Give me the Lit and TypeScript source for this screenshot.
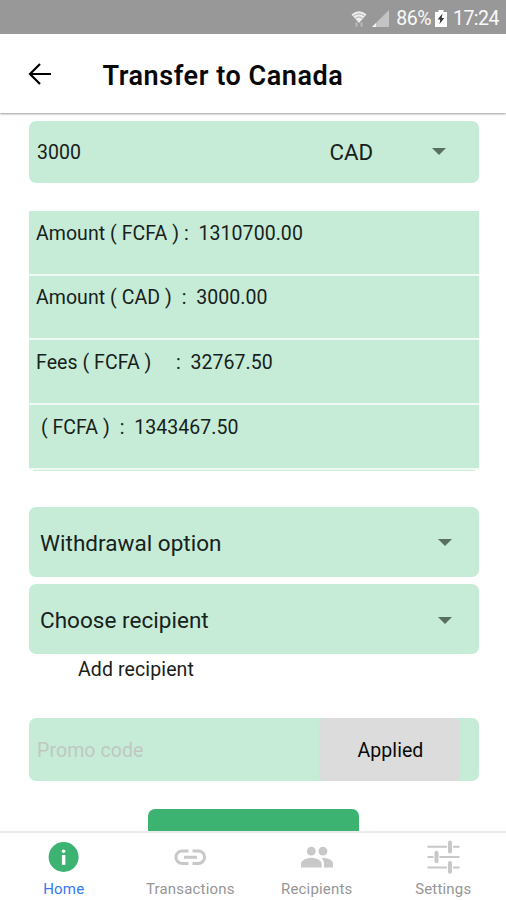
import { LitElement, html, css, svg } from "lit";
import { customElement, property } from "lit/decorators.js";

@customElement("status-bar")
class StatusBar extends LitElement {
  static styles = css`
    :host {
      display: flex;
      align-items: center;
      justify-content: flex-end;
      height: 34px;
      flex: none;
      box-sizing: border-box;
      padding: 3px 7px 0 0;
      background: #989898;
      color: #fafafa;
      font-size: 19.5px;
      line-height: 24px;
      white-space: pre;
    }
    .wifi { margin-right: 5px; }
    .signal { margin-right: 7px; }
    .battery { margin: 0 6px 0 4px; }
    svg { display: block; flex: none; }
    .level { letter-spacing: -0.5px; padding-top: 1px; }
    .time { letter-spacing: -0.5px; padding-top: 1px; }
  `;
  render() {
    return html`
      <svg class="wifi" width="16" height="18" viewBox="0 0 16 18">
        <path d="M0.5 4.5Q8-2 15.5 4.5L8 13Z" fill="#eee" />
        <path d="M2.5 6Q8 1.7 13.5 6M4.4 8.2Q8 5.4 11.6 8.2" fill="none" stroke="#a8a8a8" stroke-width="0.9" />
        <path d="M5.5 12.5v4M10.5 16.5v-4" fill="none" stroke="#bcbcbc" stroke-width="2" />
      </svg>
      <svg class="signal" width="17" height="18" viewBox="0 0 17 18">
        <path d="M17 0V17H0Z" fill="#c4c4c4" />
        <path d="M4 13v4H0Z" fill="#f4f4f4" />
      </svg>
      <span class="level">86%</span>
      <svg class="battery" width="12" height="17" viewBox="0 0 12 17">
        <path d="M3.5 0h5v2H12v15H0V2h3.5z" fill="#fff" />
        <path d="M7.5 3.5 2.7 9.6h2.6L4.5 14 9.3 7.9H6.6z" fill="#333" />
      </svg>
      <span class="time">17:24</span>
    `;
  }
}

@customElement("select-field")
class SelectField extends LitElement {
  @property() label = "";
  static styles = css`
    :host {
      display: flex;
      align-items: center;
      justify-content: space-between;
      height: 70px;
      box-sizing: border-box;
      padding: 1.5px 26.5px 0 11.5px;
      border-radius: 7px;
      background: #c6ecd7;
      font-size: 22.5px;
      line-height: 28px;
      letter-spacing: 0.03px;
    }
    svg { display: block; }
  `;
  render() {
    return html`<span>${this.label}</span>
      <svg width="14" height="7" viewBox="0 0 14 7"><path d="M0 0H14L7 7Z" fill="#57705f" /></svg>`;
  }
}

const icons = {
  info: svg`<circle cx="16.6" cy="17" r="15" fill="#3cb371"/><circle cx="16.6" cy="11.2" r="1.8" fill="#fff"/><rect x="14.9" y="15" width="3.5" height="9.8" fill="#fff"/>`,
  link: svg`<path d="M15.5 10.9H9.2a6.3 6.3 0 0 0 0 12.6H15.5M19.5 10.9h5.8a6.3 6.3 0 0 1 0 12.6H19.5M11 17.2h13" fill="none" stroke="#c8c8c8" stroke-width="3"/>`,
  people: svg`<g fill="#c8c8c8"><circle cx="11.3" cy="11.2" r="4.4"/><circle cx="22.9" cy="11.2" r="4.4"/><path d="M1 27.5v-3.6c0-4 6.5-6.2 10.3-6.2s10.4 2.2 10.4 6.2v3.6zM24 27.5v-3.7c0-2.2-.8-4.200-2.300-5.600 4.300-.8 11.300 1.400 11.300 5.600v3.700z"/></g>`,
  sliders: svg`<g stroke="#c8c8c8" fill="none"><path d="M1.5 6.8H21M27 6.8H33.5M1.5 17H7.5M13.5 17H33.5M1.5 27.5H21M27 27.5H33.5" stroke-width="2"/><path d="M24 2.6v8.8M10.500 12.800v8.400M24 23v8.800" stroke-width="4" stroke-linecap="round"/></g>`,
};

@customElement("tab-bar")
class TabBar extends LitElement {
  static styles = css`
    :host {
      display: grid;
      grid-template-columns: repeat(4, 1fr);
      height: 69px;
      flex: none;
      box-sizing: border-box;
      border-top: 2px solid #ebebeb;
      background: #fff;
    }
    .tab {
      display: flex;
      flex-direction: column;
      align-items: center;
      padding: 7px 0 0 1px;
      color: #969696;
      font-size: 15px;
      line-height: 18px;
      letter-spacing: 0.18px;
    }
    .active { color: #3478f6; }
    svg { display: block; width: 34px; height: 34px; margin-bottom: 6px; }
  `;
  render() {
    const tabs = [
      { label: "Home", icon: icons.info, active: true },
      { label: "Transactions", icon: icons.link },
      { label: "Recipients", icon: icons.people },
      { label: "Settings", icon: icons.sliders },
    ];
    return tabs.map(
      (t) => html`<div class="tab ${t.active ? "active" : ""}">
        <svg viewBox="0 0 34 34">${t.icon}</svg><span>${t.label}</span>
      </div>`
    );
  }
}

@customElement("app-root")
class AppRoot extends LitElement {
  static styles = css`
    :host {
      display: flex;
      flex-direction: column;
      width: 506px;
      height: 900px;
      overflow: hidden;
      background: #fff;
      color: #17211b;
      font-family: Roboto, "Liberation Sans", sans-serif;
    }
    svg { display: block; flex: none; }
    header {
      display: flex;
      align-items: center;
      height: 79px;
      flex: none;
      box-sizing: border-box;
      padding: 0 0 0 28px;
      gap: 51.5px;
      color: #080808;
      box-shadow: 0 1px 2px #999;
      background: #fff;
      z-index: 1;
    }
    h1 {
      margin: 5px 0 0;
      font-size: 27px;
      line-height: 32px;
      font-weight: 600;
      letter-spacing: 0.56px;
      white-space: nowrap;
    }
    main {
      flex: 1;
      min-height: 0;
      overflow: hidden;
      padding: 7.5px 27.5px 0 28.5px;
    }
    .box {
      display: flex;
      align-items: center;
      height: 62.5px;
      border-radius: 7px;
      background: #c6ecd7;
      box-sizing: border-box;
      padding-left: 8.5px;
      font-size: 19.5px;
      line-height: 24px;
    }
    .value { flex: 1; padding-top: 2px; }
    .currency { width: 102px; font-size: 22.3px; margin-top: 1px; }
    .amount svg { margin-right: 33px; }
    .summary {
      margin-top: 28px;
      white-space: pre;
      font-size: 19.5px;
      line-height: 24px;
      letter-spacing: 0.06px;
    }
    .row {
      height: 64.7px;
      box-sizing: border-box;
      background: #c6ecd7;
      border-bottom: 2px solid #f0faf4;
      padding: 10.7px 0 0 7.5px;
    }
    .edge {
      height: 1.5px;
      margin: 0 4px;
      background: #ccebda;
    }
    .selects { display: grid; gap: 7.5px; margin-top: 35.5px; }
    .add {
      margin: 4px 0 0 49.5px;
      font-size: 19.5px;
      line-height: 24px;
      height: 24px;
      letter-spacing: 0.12px;
    }
    .promo { margin-top: 36px; }
    .hint { color: #c0c7c1; flex: 1; letter-spacing: 0.1px; padding-top: 2px; }
    .applied {
      display: flex;
      align-items: center;
      justify-content: center;
      width: 141px;
      height: 63px;
      margin-right: 19px;
      border-radius: 5px;
      background: #dcdcdc;
      color: #0a0a0a;
      padding: 2px 0 0 3px;
      letter-spacing: 0.05px;
      box-sizing: border-box;
    }
    .submit {
      width: 210.5px;
      height: 62px;
      margin: 28.5px auto 0 119.5px;
      border-radius: 7px;
      background: #3cb371;
    }
  `;
  render() {
    const rows = [
      "Amount ( FCFA ) :  1310700.00",
      "Amount ( CAD )  :  3000.00",
      "Fees ( FCFA )     :  32767.50",
      " ( FCFA )  :  1343467.50",
    ];
    return html`
      <status-bar></status-bar>
      <header>
        <svg width="23" height="22" viewBox="0 0 23 22">
          <path d="M12 1 2 11l10 10M2 11h21" fill="none" stroke="#000" stroke-width="2.2" />
        </svg>
        <h1>Transfer to Canada</h1>
      </header>
      <main>
        <div class="box amount">
          <span class="value">3000</span>
          <span class="currency">CAD</span>
          <svg width="14" height="7" viewBox="0 0 14 7"><path d="M0 0H14L7 7Z" fill="#57705f" /></svg>
        </div>
        <div class="summary">${rows.map((r) => html`<div class="row">${r}</div>`)}<div class="edge"></div></div>
        <div class="selects">
          <select-field label="Withdrawal option"></select-field>
          <select-field label="Choose recipient"></select-field>
        </div>
        <div class="add">Add recipient</div>
        <div class="box promo">
          <span class="hint">Promo code</span>
          <span class="applied">Applied</span>
        </div>
        <div class="submit"></div>
      </main>
      <tab-bar></tab-bar>
    `;
  }
}
